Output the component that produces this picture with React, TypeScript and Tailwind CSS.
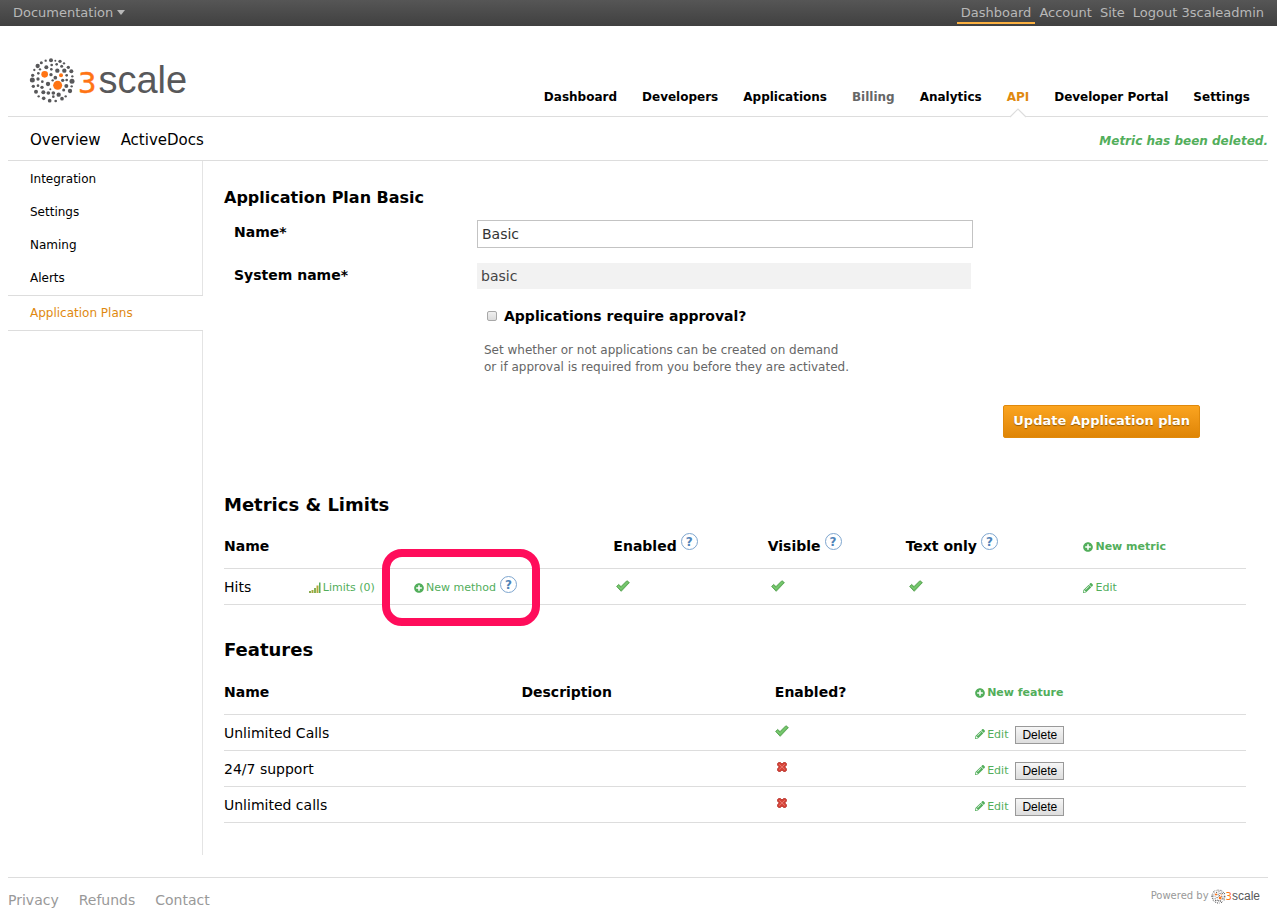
import React from "react";
import { FaPencilAlt, FaPlusCircle } from "react-icons/fa";

const GRAY = "#58585a";
const ORANGE = "#ff7414";

const DOTS: [number, number, number][] = [
  [153, 181, 6], [166, 182, 3], [137, 182, 3.5], [180, 184, 5], [124, 188, 4.5], [192, 190, 3.5],
  [113, 198, 6.5], [205, 202, 5], [170, 193, 4], [155, 195, 4], [139, 202, 6], [154, 208, 4],
  [185, 199, 4.5], [103, 210, 3.5], [120, 208, 3.5], [214, 214, 6], [172, 212, 6.5], [193, 212, 6.5],
  [98, 226, 5], [153, 224, 5], [115, 220, 4], [200, 226, 4], [217, 229, 3.5], [97, 240, 7.5],
  [114, 237, 5], [216, 244, 7.5], [200, 240, 4], [166, 233, 5.5], [188, 241, 5], [127, 245, 4],
  [144, 252, 6.5], [158, 241, 3.5], [100, 259, 5], [114, 257, 4], [199, 258, 6], [215, 259, 3.5],
  [126, 262, 5], [151, 268, 3], [108, 275, 6], [130, 277, 6], [145, 279, 5.5], [160, 279, 5.5],
  [191, 270, 4.5], [210, 273, 6.5], [116, 289, 3.5], [176, 284, 6.5], [131, 295, 5.5], [160, 290, 4],
  [149, 302, 5.5], [167, 303, 4], [186, 296, 5.5], [197, 289, 3.5],
];

function LogoMark({ className }: { className: string }) {
  return (
    <svg viewBox="87 171 141 141" className={className} aria-hidden="true">
      {DOTS.map(([x, y, r]) => (
        <circle key={`${x}-${y}`} cx={x} cy={y} r={r} fill={GRAY} />
      ))}
      <circle cx={134} cy={223} r={10} fill={ORANGE} />
      <circle cx={183} cy={226} r={6} fill={ORANGE} />
      <circle cx={173} cy={256} r={13.5} fill={ORANGE} />
    </svg>
  );
}

function Tick() {
  return (
    <svg viewBox="0 0 14 12" className="h-3 w-[14px]" role="img" aria-label="Yes">
      <path d="M0.6 6.4 2.6 4.4 5 6.6 10.9 0.7 13.4 2.6 5.2 11.3Z" fill="#6abf62" stroke="#4e9a49" strokeWidth=".8" strokeLinejoin="round" />
      <path d="M1.8 6.1 5 8.8 11.5 2" fill="none" stroke="#82cc79" strokeWidth="1" />
    </svg>
  );
}

function Cross() {
  return (
    <svg viewBox="0 0 10 10" className="h-[10px] w-[14px]" role="img" aria-label="No">
      <path d="M.6 1.4 1.6.6 3.5.6 5 2 6.5.6 8.4.6 9.4 1.4 9.4 3.2 7.8 4.9 9.4 6.7 9.4 8.6 8.4 9.4 6.5 9.4 5 7.9 3.5 9.4 1.6 9.4.6 8.6.6 6.7 2.2 4.9.6 3.2Z" fill="#d8453a" stroke="#b0271f" strokeWidth=".8" />
      <path d="M2.2 2.3 7.8 7.6M7.8 2.3 2.2 7.6" stroke="#e8766d" strokeWidth="1" />
    </svg>
  );
}

function Signal() {
  return (
    <svg viewBox="0 0 12 11" className="h-[11px] w-3" aria-hidden="true">
      <path d="M0 9h2v2H0z" fill="#8aab50" />
      <path d="M2.500 8h2v3h-2z" fill="#a3a83c" />
      <path d="M5 6h2v5H5z" fill="#86b257" />
      <path d="M7.500 3.500h2V11h-2z" fill="#b5a83c" />
      <path d="M10 .5h1.500V11H10z" fill="#55ad5c" />
    </svg>
  );
}

function Help({ topic }: { topic: string }) {
  return (
    <button
      type="button"
      aria-label={`Help: ${topic}`}
      className="flex size-[17px] shrink-0 items-center justify-center rounded-full border border-[#7ea6cf] bg-white text-xs leading-none font-bold text-[#4f83b8]"
    >
      ?
    </button>
  );
}

function ActionLink({ icon, children, bold }: { icon: React.ReactNode; children: React.ReactNode; bold?: boolean }) {
  return (
    <a href="#" className={`inline-flex items-center gap-0.5 text-[11px] whitespace-nowrap text-[#52ae5b] ${bold ? "font-bold" : ""}`}>
      {icon}
      {children}
    </a>
  );
}

const plus = <FaPlusCircle className="size-[10px]" />;
const pencil = <FaPencilAlt className="size-[10px]" />;

const NAV = ["Dashboard", "Developers", "Applications", "Billing", "Analytics", "API", "Developer Portal", "Settings"];
const SIDE = ["Integration", "Settings", "Naming", "Alerts"];
const FEATURES = [
  { id: 1, name: "Unlimited Calls", enabled: true },
  { id: 2, name: "24/7 support", enabled: false },
  { id: 3, name: "Unlimited calls", enabled: false },
];

function navColor(item: string) {
  if (item === "API") return "text-[#e0890f]";
  if (item === "Billing") return "text-[#666666]";
  return "text-black";
}

export default function App() {
  return (
    <div className="min-h-screen bg-white font-[Verdana,'DejaVu_Sans',sans-serif] text-sm text-black">
      <div className="flex h-[26px] items-start justify-between bg-linear-to-b from-[#565656] to-[#404040] px-[13px] text-[13px] leading-[19px] text-[#b8b8b8]">
        <a href="#" className="flex items-center gap-1 pt-[3px]">
          Documentation
          <svg viewBox="0 0 8 5" className="h-[5px] w-2" aria-hidden="true">
            <path d="M0 0h8L4 5z" fill="#b8b8b8" />
          </svg>
        </a>
        <nav className="flex gap-2 pt-[3px]">
          <a href="#" className="-mr-1 border-b-2 border-[#fbb040] px-1">Dashboard</a>
          <a href="#">Account</a>
          <a href="#">Site</a>
          <a href="#">Logout 3scaleadmin</a>
        </nav>
      </div>

      <div className="mr-[9px] ml-2">
        <header className="flex h-[91px] items-end justify-between border-b border-[#dddddd] pr-[18px] pl-[21px]">
          <a href="#" aria-label="3scale" className="mb-[11px] flex items-center gap-0.5">
            <LogoMark className="size-[47px]" />
            <span className="flex items-baseline gap-0.5 pt-[3px] leading-[44px]">
              <span className="text-[29px] text-[#ff7414] [-webkit-text-stroke:0.5px_#ff7414]">3</span>
              <span className="font-['Liberation_Sans',sans-serif] text-[38px] text-[#58585a]">scale</span>
            </span>
          </a>
          <nav className="flex gap-[25px] text-xs leading-5 font-bold">
            {NAV.map((item) => (
              <a key={item} href="#" className={`relative pb-[9px] ${navColor(item)}`}>
                {item}
                {item === "API" && (
                  <svg viewBox="0 0 18 10" className="absolute -bottom-0.5 left-1/2 h-[10px] w-[18px] -translate-x-1/2" aria-hidden="true">
                    <path d="M1 9 9 1l8 8v1H1z" fill="#fff" />
                    <path d="M1 9 9 1l8 8" fill="none" stroke="#dddddd" strokeWidth="1.200" />
                  </svg>
                )}
              </a>
            ))}
          </nav>
        </header>

        <div className="flex h-11 items-center justify-between border-b border-[#dddddd] pt-1 pl-[22px]">
          <nav className="flex gap-5 text-[15px]">
            <a href="#">Overview</a>
            <a href="#">ActiveDocs</a>
          </nav>
          <p className="text-xs font-bold text-[#52ae5b] italic">Metric has been deleted.</p>
        </div>

        <div className="flex">
          <aside className="flex w-[195px] shrink-0 flex-col text-xs">
            <ul className="flex h-[134px] flex-col border-r border-[#e4e4e4] pt-px">
              {SIDE.map((item) => (
                <li key={item} className="flex grow items-center pl-[22px]">
                  <a href="#">{item}</a>
                </li>
              ))}
            </ul>
            <a href="#" className="flex h-9 shrink-0 items-center border-y border-[#dddddd] pl-[22px] text-[#e0890f]">
              Application Plans
            </a>
            <div className="grow border-r border-[#e4e4e4]" />
          </aside>

          <main className="min-w-0 grow pt-[25px] pr-[22px] pb-8 pl-[21px]">
            <h2 className="text-base leading-6 font-bold">Application Plan Basic</h2>
            <form className="pt-[10px] pl-[10px]" onSubmit={(e) => e.preventDefault()}>
              <div className="flex h-7 items-start">
                <label htmlFor="plan-name" className="w-[243px] shrink-0 leading-6 font-bold">Name*</label>
                <input id="plan-name" defaultValue="Basic" className="h-7 w-full max-w-[496px] border border-[#c3c3c3] px-1 text-sm text-[#333333]" />
              </div>
              <div className="mt-[15px] flex h-[26px] items-start">
                <label htmlFor="system-name" className="w-[243px] shrink-0 leading-6 font-bold">System name*</label>
                <input id="system-name" defaultValue="basic" readOnly className="h-[26px] w-full max-w-[494px] bg-[#f2f2f2] px-1 text-sm text-[#444444]" />
              </div>
              <div className="mt-[15px] flex h-6 items-center gap-[7px] pl-[253px]">
                <input id="approval" type="checkbox" className="size-[10px] appearance-none rounded-xs border border-[#a8a8a8] bg-linear-to-b from-[#f0f0f0] to-[#dcdcdc]" />
                <label htmlFor="approval" className="leading-6 font-bold">Applications require approval?</label>
              </div>
              <p className="mt-[14px] pl-[250px] text-xs leading-[17px] text-[#666666]">
                Set whether or not applications can be created on demand
                <br />
                or if approval is required from you before they are activated.
              </p>
              <div className="mt-[29px] flex justify-end pr-[46px]">
                <button
                  type="submit"
                  className="h-[33px] rounded-xs border border-[#e0890b] bg-linear-to-b from-[#fba41f] to-[#df8505] px-[9px] text-[13px] font-bold text-white text-shadow-[0_1px_1px_#9a5c00]"
                >
                  Update Application plan
                </button>
              </div>
            </form>

            <h2 className="mt-[55px] text-lg leading-6 font-bold">Metrics &amp; Limits</h2>
            <table className="mt-[5px] w-full table-fixed border-collapse text-left">
              <colgroup>
                <col className="w-[8.3%]" />
                <col className="w-[10.3%]" />
                <col className="w-[19.5%]" />
                <col className="w-[15.1%]" />
                <col className="w-[13.5%]" />
                <col className="w-[17.4%]" />
                <col className="w-[15.9%]" />
              </colgroup>
              <thead>
                <tr className="h-[46px] border-b border-[#dddddd]">
                  <th colSpan={3} className="p-0 pt-0.5">Name</th>
                  {["Enabled", "Visible", "Text only"].map((t) => (
                    <th key={t} className="p-0">
                      <div className="flex items-start gap-1 whitespace-nowrap">
                        <span className="pt-[3px]">{t}</span>
                        <Help topic={t} />
                      </div>
                    </th>
                  ))}
                  <th className="p-0 pt-1"><ActionLink icon={plus} bold>New metric</ActionLink></th>
                </tr>
              </thead>
              <tbody>
                <tr className="h-9 border-b border-[#dddddd]">
                  <td className="p-0 pt-0.5">Hits</td>
                  <td className="p-0 pt-1"><ActionLink icon={<Signal />}>Limits (0)</ActionLink></td>
                  <td className="p-0 pt-0.5">
                    <div className="relative flex w-[103px] items-start justify-between">
                      <span className="pt-0.5"><ActionLink icon={plus}>New method</ActionLink></span>
                      <Help topic="New method" />
                      <span className="pointer-events-none absolute -inset-x-8 -top-[27px] h-[77px] w-[158px] rounded-[20px] border-8 border-[#ff0d5b]" />
                    </div>
                  </td>
                  <td className="p-0 pl-[3px]"><Tick /></td>
                  <td className="p-0 pl-[3px]"><Tick /></td>
                  <td className="p-0 pl-[3px]"><Tick /></td>
                  <td className="p-0 pt-1"><ActionLink icon={pencil}>Edit</ActionLink></td>
                </tr>
              </tbody>
            </table>

            <h2 className="mt-[33px] text-lg leading-6 font-bold">Features</h2>
            <table className="mt-[7px] w-full table-fixed border-collapse text-left">
              <colgroup>
                <col className="w-[29.1%]" />
                <col className="w-[24.8%]" />
                <col className="w-[19.6%]" />
                <col />
              </colgroup>
              <thead>
                <tr className="h-[46px] border-b border-[#dddddd]">
                  <th className="p-0 pt-0.5">Name</th>
                  <th className="p-0 pt-0.5">Description</th>
                  <th className="p-0 pt-0.5">Enabled?</th>
                  <th className="p-0 pt-1"><ActionLink icon={plus} bold>New feature</ActionLink></th>
                </tr>
              </thead>
              <tbody>
                {FEATURES.map((f) => (
                  <tr key={f.id} className="h-9 border-b border-[#dddddd]">
                    <td className="p-0">{f.name}</td>
                    <td className="p-0" />
                    <td className="p-0 pb-1">{f.enabled ? <Tick /> : <Cross />}</td>
                    <td className="p-0">
                      <div className="flex items-center gap-[7px] pt-1">
                        <ActionLink icon={pencil}>Edit</ActionLink>
                        <button
                          type="button"
                          className="h-[18px] border border-[#999999] bg-linear-to-b from-[#f6f6f6] to-[#dddddd] px-1.5 font-['Liberation_Sans',sans-serif] text-xs leading-4"
                        >
                          Delete
                        </button>
                      </div>
                    </td>
                  </tr>
                ))}
              </tbody>
            </table>
          </main>
        </div>

        <footer className="mt-[22px] flex h-10 items-center justify-between border-t border-[#dddddd] pr-2 text-[#999999]">
          <nav className="flex gap-5 pt-1">
            <a href="#">Privacy</a>
            <a href="#">Refunds</a>
            <a href="#">Contact</a>
          </nav>
          <div className="flex items-center gap-0.5 pb-0.5 text-[10px]">
            Powered by
            <a href="#" aria-label="3scale" className="flex items-center">
              <LogoMark className="size-[15px]" />
              <span className="flex items-baseline leading-4">
                <span className="text-[10px] text-[#ff7414]">3</span>
                <span className="font-['Liberation_Sans',sans-serif] text-xs text-[#58585a]">scale</span>
              </span>
            </a>
          </div>
        </footer>
      </div>
    </div>
  );
}
